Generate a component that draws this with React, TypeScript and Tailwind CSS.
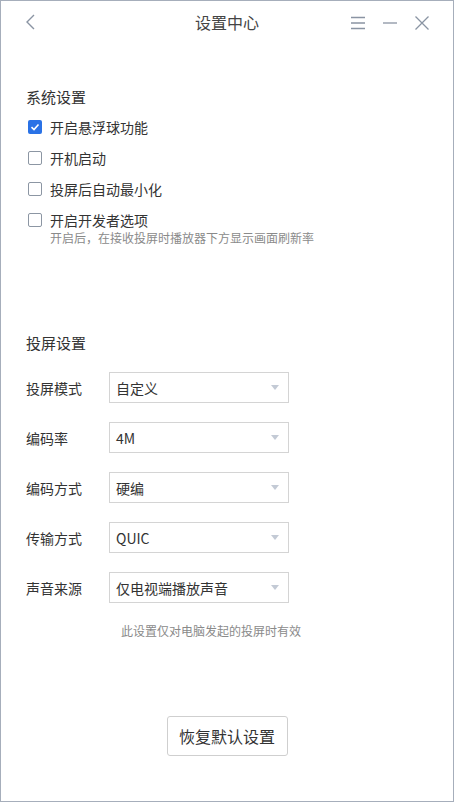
import { useState } from 'react';

const font = { fontFamily: '"Noto Sans CJK SC", "Noto Sans", sans-serif' };

const checks = [
  { label: '开启悬浮球功能', on: true },
  { label: '开机启动', on: false },
  { label: '投屏后自动最小化', on: false },
  { label: '开启开发者选项', on: false, hint: '开启后，在接收投屏时播放器下方显示画面刷新率' },
];

const selects = [
  { label: '投屏模式', value: '自定义' },
  { label: '编码率', value: '4M' },
  { label: '编码方式', value: '硬编' },
  { label: '传输方式', value: 'QUIC' },
  { label: '声音来源', value: '仅电视端播放声音' },
];

function Checkbox({ on }: { on: boolean }) {
  if (on) {
    return (
      <span className="w-[14px] h-[14px] rounded-[2px] bg-[#2a72e6] flex items-center justify-center">
        <svg width="10" height="10" viewBox="0 0 10 10">
          <path d="M1.5 5.2 L4 7.5 L8.5 2.5" fill="none" stroke="#fff" strokeWidth="1.6" />
        </svg>
      </span>
    );
  }
  return <span className="block w-[14px] h-[14px] rounded-[2px] border border-[#8c96a3] bg-white" />;
}

export default function App() {
  const [state, setState] = useState(checks.map((c) => c.on));

  return (
    <div style={font} className="w-[454px] h-[802px] border border-[#a6aebb] bg-white flex flex-col text-[#333]">
      <div className="h-[41px] flex items-center relative">
        <svg className="absolute left-[23px] top-[12px]" width="14" height="18" viewBox="0 0 14 18">
          <path d="M10 2 L3 9 L10 16" fill="none" stroke="#8a94a3" strokeWidth="1.4" />
        </svg>
        <div className="flex-1 text-center text-[16px] leading-[20px] text-[#444]">设置中心</div>
        <svg className="absolute left-[349px] top-[14px]" width="16" height="16" viewBox="0 0 16 16">
          <path d="M1 2.5 H15 M1 8 H15 M1 13.5 H15" stroke="#8a94a3" strokeWidth="1.3" />
        </svg>
        <svg className="absolute left-[381px] top-[14px]" width="16" height="16" viewBox="0 0 16 16">
          <path d="M1 8 H15" stroke="#8a94a3" strokeWidth="1.3" />
        </svg>
        <svg className="absolute left-[413px] top-[14px]" width="16" height="16" viewBox="0 0 16 16">
          <path d="M1.5 1.5 L14.5 14.5 M14.5 1.5 L1.5 14.5" stroke="#8a94a3" strokeWidth="1.3" />
        </svg>
      </div>

      <div className="px-[25px] pt-[45px]">
        <div className="text-[15px] leading-[20px]">系统设置</div>
        <div className="mt-[10px] flex flex-col gap-[11px]">
          {checks.map((c, i) => (
            <div key={c.label}>
              <div
                className="flex items-center h-[20px] cursor-pointer"
                onClick={() => setState((s) => s.map((v, j) => (j === i ? !v : v)))}
              >
                <span className="ml-[2px] mr-[8px]">
                  <Checkbox on={state[i]} />
                </span>
                <span className="text-[14px] leading-[20px]">{c.label}</span>
              </div>
              {c.hint && (
                <div className="pl-[24px] text-[12px] leading-[16px] text-[#8a8a8a]">{c.hint}</div>
              )}
            </div>
          ))}
        </div>

        <div className="mt-[87px] text-[15px] leading-[20px]">投屏设置</div>
        <div className="mt-[19px] flex flex-col gap-[19px]">
          {selects.map((s) => (
            <div key={s.label} className="flex items-center">
              <span className="w-[83px] text-[14px] leading-[20px]">{s.label}</span>
              <div className="w-[180px] h-[31px] border border-[#d4d4d4] flex items-center justify-between pl-[6px] pr-[9px]">
                <span className="text-[14px] leading-[20px]">{s.value}</span>
                <svg width="8" height="5" viewBox="0 0 8 5">
                  <path d="M0 0 H8 L4 5 Z" fill="#c3cad5" />
                </svg>
              </div>
            </div>
          ))}
        </div>
        <div className="mt-[20px] pl-[95px] text-[12px] leading-[16px] text-[#8a8a8a]">此设置仅对电脑发起的投屏时有效</div>
      </div>

      <div className="mt-[77px] flex justify-center">
        <button className="w-[121px] h-[40px] border border-[#cfcfcf] rounded-[3px] bg-white text-[16px] text-[#333]">
          恢复默认设置
        </button>
      </div>
    </div>
  );
}
